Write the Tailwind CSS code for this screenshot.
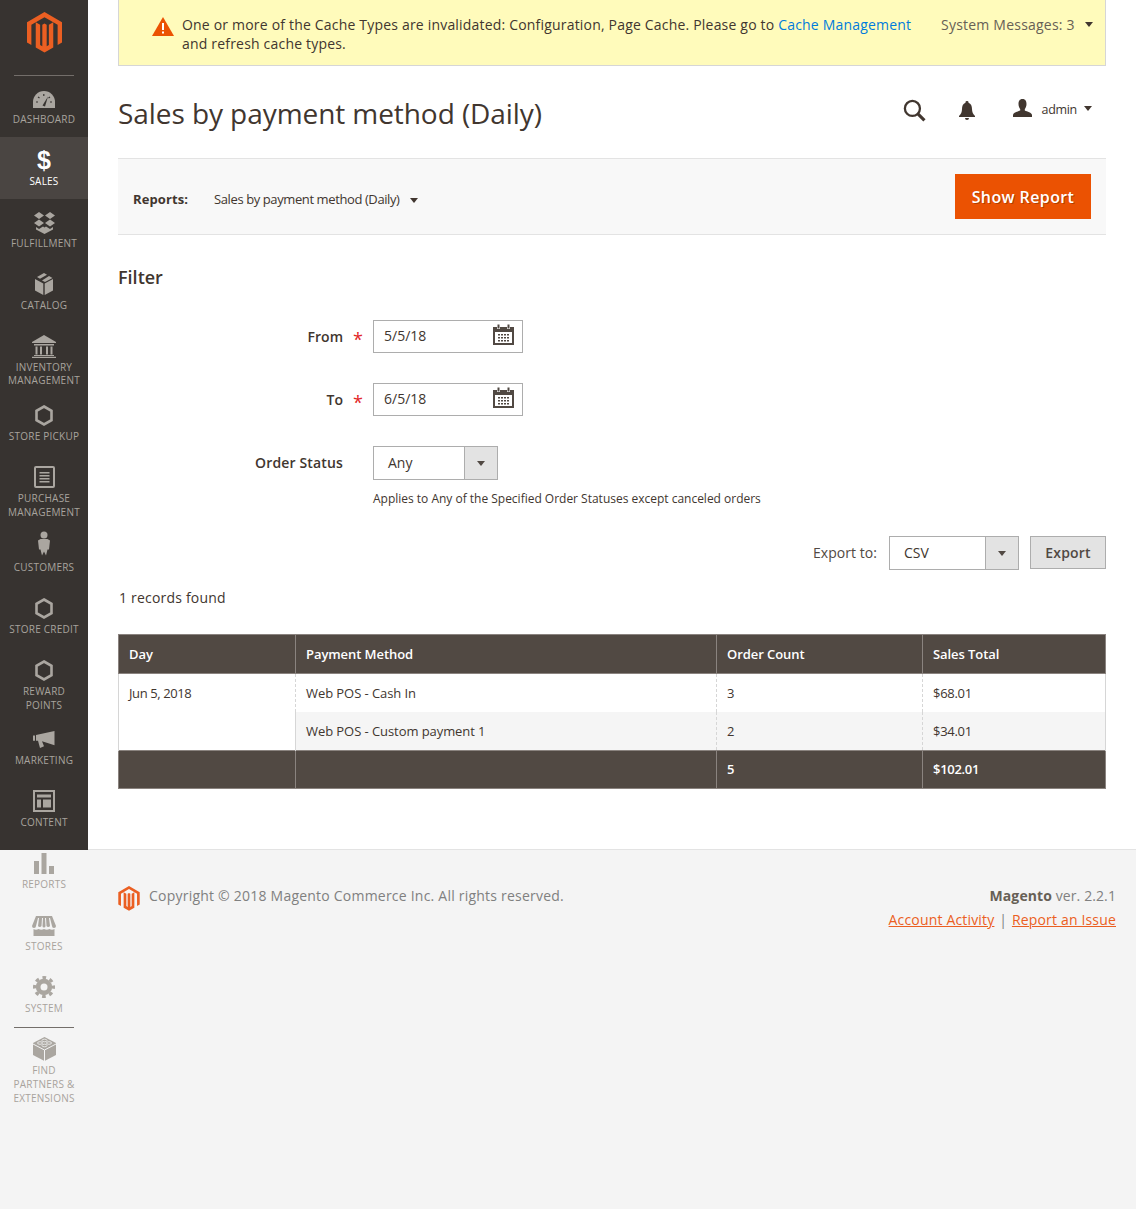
<!DOCTYPE html>
<html><head><meta charset="utf-8"><script src="https://cdn.jsdelivr.net/npm/@tailwindcss/browser@4"></script></head>
<body class="bg-white">
<div class="relative w-[1136px] h-[1209px] overflow-hidden font-['Open_Sans',sans-serif] text-[14px] text-[#41362f]">

<!-- main -->
<main class="h-[849px] pl-[118px] pr-[30px]">
  <div class="h-[66px] bg-[#fffbbb] border border-t-0 border-[#d6d6d6] flex">
    <svg class="ml-[33px] mt-[17px] w-[22px] h-[19px] shrink-0" viewBox="0 0 22 19"><path d="M11 0 L22 19 H0Z" fill="#eb5202"/><rect x="10" y="6" width="2" height="7" fill="#fff"/><rect x="10" y="14.5" width="2" height="2" fill="#fff"/></svg>
    <p class="ml-[8px] mt-[15px] w-[745px] leading-[19px] tracking-[0.19px] text-[#41362f]">One or more of the Cache Types are invalidated: Configuration, Page Cache. Please go to <span class="text-[#007bdb]">Cache Management</span> and refresh cache types.</p>
    <div class="ml-[14px] mt-[15px] flex h-[19px] items-center text-[#676056]"><span class="tracking-[0.22px]">System Messages: 3</span><span class="ml-[10px] w-0 h-0 border-x-[4.5px] border-x-transparent border-t-[5px] border-t-[#41362f]"></span></div>
  </div>

  <header class="h-[92px] flex relative">
    <h1 class="mt-[28px] text-[28px] leading-[38px] font-normal tracking-[-0.07px] text-[#41362f]">Sales by payment method (Daily)</h1>
    <div class="ml-auto flex items-start pt-[33px]">
      <svg class="w-[23px] h-[23px]" viewBox="0 0 22 22" fill="none" stroke="#41362f"><circle cx="9" cy="9" r="7.2" stroke-width="2.2"/><path d="M14 14 L20.5 20.5" stroke-width="3"/></svg>
      <svg class="ml-[33px] mt-[2px] w-[16px] h-[19px]" viewBox="0 0 16 19" fill="#41362f"><path d="M8 0 a1.5 1.5 0 0 1 1.5 1.7 C12 2.5 13 5 13 8 C13 11 14 13 16 15 V16 H0 V15 C2 13 3 11 3 8 C3 5 4 2.5 6.5 1.7 A1.5 1.5 0 0 1 8 0Z"/><path d="M6 17 h4 a2 2 0 0 1-4 0Z"/></svg>
      <svg class="ml-[38px] w-[19px] h-[18px]" viewBox="0 0 19 18" fill="#41362f"><path d="M9.5 0 C12.5 0 13.5 2.3 13.5 5 C13.5 7.5 12.5 9 11.8 10 V11.5 C14 12.5 19 13.5 19 16 V18 H0 V16 C0 13.5 5 12.5 7.2 11.5 V10 C6.5 9 5.5 7.5 5.5 5 C5.5 2.3 6.5 0 9.5 0Z"/></svg>
      <span class="ml-[10px] text-[12.5px] tracking-[-0.3px] leading-[22px] text-[#41362f]">admin</span>
      <span class="ml-[7px] mt-[7px] w-0 h-0 border-x-[4px] border-x-transparent border-t-[5px] border-t-[#41362f]"></span>
      <span class="w-[14px]"></span>
    </div>
  </header>

  <section class="h-[77px] bg-[#f8f8f8] border-y border-[#e3e3e3] flex items-center pl-[15px] pr-[15px]">
    <span class="mt-[7px] text-[13px] font-bold tracking-[0.1px]">Reports:</span>
    <span class="ml-[26px] mt-[7px] text-[13px] tracking-[-0.4px] text-[#41362f]">Sales by payment method (Daily)</span>
    <span class="ml-[10px] mt-[7px] w-0 h-0 border-x-[4px] border-x-transparent border-t-[5px] border-t-[#41362f]"></span>
    <button class="ml-auto w-[136px] h-[45px] bg-[#eb5202] text-white text-[16px] font-semibold tracking-[0.4px] [text-shadow:1px_1px_0_rgba(0,0,0,0.25)]">Show Report</button>
  </section>

  <h2 class="mt-[30px] text-[18px] leading-[25px] font-semibold text-[#41362f]">Filter</h2>

  <div class="mt-[30px] flex h-[33px]">
    <label class="w-[225px] text-right font-semibold leading-[34px]">From</label>
    <span class="w-[30px] pl-[10px] text-[#e22626] text-[18px] leading-[39px]">*</span>
    <div class="w-[150px] h-[33px] bg-white border border-[#adadad] flex items-center pl-[10px] pr-[8px] pb-[2px] text-[#41362f]">5/5/18
      <svg class="ml-auto mb-[2px] w-[21px] h-[21px]" viewBox="0 0 21 21"><path d="M0 3 H4 V5 H7 V3 H14 V5 H17 V3 H21 V21 H0Z M2 8 V19 H19 V8Z" fill="#514943" fill-rule="evenodd"/><rect x="4.5" y="0.5" width="2" height="4" fill="#514943"/><rect x="14.5" y="0.5" width="2" height="4" fill="#514943"/><path d="M5 10h2v1.500h-2z M8 10h2v1.500h-2z M11 10h2v1.500h-2z M14 10h2v1.500h-2z M5 13h2v1.500h-2z M8 13h2v1.500h-2z M11 13h2v1.500h-2z M14 13h2v1.500h-2z M5 16h2v1.500h-2z M8 16h2v1.500h-2z M11 16h2v1.500h-2z M14 16h2v1.500h-2z" fill="#514943"/></svg>
    </div>
  </div>
  <div class="mt-[30px] flex h-[33px]">
    <label class="w-[225px] text-right font-semibold leading-[34px]">To</label>
    <span class="w-[30px] pl-[10px] text-[#e22626] text-[18px] leading-[39px]">*</span>
    <div class="w-[150px] h-[33px] bg-white border border-[#adadad] flex items-center pl-[10px] pr-[8px] pb-[2px] text-[#41362f]">6/5/18
      <svg class="ml-auto mb-[2px] w-[21px] h-[21px]" viewBox="0 0 21 21"><path d="M0 3 H4 V5 H7 V3 H14 V5 H17 V3 H21 V21 H0Z M2 8 V19 H19 V8Z" fill="#514943" fill-rule="evenodd"/><rect x="4.5" y="0.5" width="2" height="4" fill="#514943"/><rect x="14.5" y="0.5" width="2" height="4" fill="#514943"/><path d="M5 10h2v1.500h-2z M8 10h2v1.500h-2z M11 10h2v1.500h-2z M14 10h2v1.500h-2z M5 13h2v1.500h-2z M8 13h2v1.500h-2z M11 13h2v1.500h-2z M14 13h2v1.500h-2z M5 16h2v1.500h-2z M8 16h2v1.500h-2z M11 16h2v1.500h-2z M14 16h2v1.500h-2z" fill="#514943"/></svg>
    </div>
  </div>
  <div class="mt-[30px] flex h-[34px]">
    <label class="w-[225px] text-right font-semibold leading-[34px] tracking-[0.15px]">Order Status</label>
    <span class="w-[30px]"></span>
    <div class="w-[125px] h-[34px] bg-white border border-[#adadad] flex items-center pl-[14px]"><span class="-mt-[2px]">Any</span>
      <span class="ml-auto w-[33px] h-full bg-[#e3e3e3] border-l border-[#adadad] flex items-center justify-center"><span class="w-0 h-0 border-x-[4px] border-x-transparent border-t-[5px] border-t-[#514943]"></span></span>
    </div>
  </div>
  <p class="ml-[255px] mt-[10px] text-[12px] leading-[18px] tracking-[-0.01px] text-[#41362f]">Applies to Any of the Specified Order Statuses except canceled orders</p>

  <div class="mt-[28px] flex items-start justify-end h-[34px]">
    <span class="leading-[34px] text-[#514943] tracking-[0.05px]">Export to:</span>
    <div class="ml-[12px] w-[130px] h-[34px] bg-white border border-[#adadad] flex items-center pl-[14px]"><span class="-mt-[2px]">CSV</span>
      <span class="ml-auto w-[33px] h-full bg-[#e3e3e3] border-l border-[#adadad] flex items-center justify-center"><span class="w-0 h-0 border-x-[4px] border-x-transparent border-t-[5px] border-t-[#514943]"></span></span>
    </div>
    <button class="ml-[11px] w-[76px] h-[33px] bg-[#e3e3e3] border border-[#adadad] font-semibold tracking-[0.2px] text-[#514943]">Export</button>
  </div>

  <p class="mt-[18px] ml-[1px] leading-[20px] tracking-[0.2px] text-[#41362f]">1 records found</p>

  <table class="mt-[26px] w-[987px] table-fixed border-collapse text-[13px] tracking-[-0.07px]">
    <colgroup><col class="w-[177px]"><col class="w-[421px]"><col class="w-[206px]"><col class="w-[183px]"></colgroup>
    <thead>
      <tr class="h-[39px] bg-[#514943] text-white">
        <th class="border border-[#8a837f] px-[10px] pt-[1px] text-left font-semibold">Day</th>
        <th class="border border-[#8a837f] px-[10px] pt-[1px] text-left font-semibold">Payment Method</th>
        <th class="border border-[#8a837f] px-[10px] pt-[1px] text-left font-semibold">Order Count</th>
        <th class="border border-[#8a837f] px-[10px] pt-[1px] text-left font-semibold">Sales Total</th>
      </tr>
    </thead>
    <tbody>
      <tr class="h-[38px]">
        <td rowspan="2" class="align-top pt-[10px] px-[10px] border-l border-[#d6d6d6] bg-white tracking-[-0.4px]">Jun 5, 2018</td>
        <td class="px-[10px] pt-[2px] border-l border-dashed border-[#d6d6d6]">Web POS - Cash In</td>
        <td class="px-[10px] pt-[2px] border-l border-dashed border-[#d6d6d6]">3</td>
        <td class="px-[10px] pt-[2px] border-x border-dashed [border-right-style:solid] border-[#d6d6d6] tracking-[-0.3px]">$68.01</td>
      </tr>
      <tr class="h-[39px] bg-[#f5f5f5]">
        <td class="px-[10px] pt-[1px] border-l border-[#d6d6d6]">Web POS - Custom payment 1</td>
        <td class="px-[10px] pt-[1px] border-l border-dashed border-[#d6d6d6]">2</td>
        <td class="px-[10px] pt-[1px] border-x border-dashed [border-right-style:solid] border-[#d6d6d6] tracking-[-0.3px]">$34.01</td>
      </tr>
    </tbody>
    <tfoot>
      <tr class="h-[38px] bg-[#514943] text-white font-semibold">
        <td class="border border-[#8a837f] px-[10px]"></td>
        <td class="border border-[#8a837f] px-[10px]"></td>
        <td class="border border-[#8a837f] px-[10px]">5</td>
        <td class="border border-[#8a837f] px-[10px] tracking-[-0.3px]">$102.01</td>
      </tr>
    </tfoot>
  </table>
</main>

<!-- footer -->
<footer class="h-[360px] bg-[#f4f4f4] border-t border-[#e3e3e3] pl-[118px] pr-[20px] pt-[36px] flex items-start">
  <svg class="w-[22px] h-[25px] shrink-0" viewBox="0 0 36 42"><path d="M18 0 L36 10.400 V31.200 L31.500 33.800 V13 L18 5.200 L4.500 13 V33.800 L0 31.200 V10.400Z M9 10.400 L13.500 13 V33.800 L15.750 35.100 V13 L18 11.700 L20.250 13 V35.100 L22.500 33.800 V13 L27 10.400 V36.400 L18 41.600 L9 36.400Z" fill="#eb5f22"/></svg>
  <p class="ml-[9px] leading-[20px] tracking-[0.22px] text-[#808080]">Copyright © 2018 Magento Commerce Inc. All rights reserved.</p>
  <div class="ml-auto text-right leading-[24px] text-[#808080] tracking-[0.1px] -mt-[2px]">
    <p><b class="font-bold text-[#676056]">Magento</b> ver. 2.2.1</p>
    <p class="tracking-[0.17px]"><a class="text-[#eb5f22] underline">Account Activity</a> <span class="mx-[1px]">|</span> <a class="text-[#eb5f22] underline">Report an Issue</a></p>
  </div>
</footer>

<!-- sidebar (overlays the footer) -->
<div class="absolute left-0 top-0 w-[88px] h-[850px] bg-[#373330]"></div>
<nav class="absolute left-0 top-0 w-[88px] text-[10px] leading-[14px] tracking-[0.22px] text-center text-[#a8a39d] flex flex-col">
  <div class="h-[76px] flex flex-col items-center relative">
    <svg class="mt-[12px] w-[35px] h-[41px]" viewBox="0 0 36 42"><path d="M18 0 L36 10.400 V31.200 L31.500 33.800 V13 L18 5.200 L4.500 13 V33.800 L0 31.200 V10.400Z M9 10.400 L13.500 13 V33.800 L15.750 35.100 V13 L18 11.700 L20.250 13 V35.100 L22.500 33.800 V13 L27 10.400 V36.400 L18 41.600 L9 36.400Z" fill="#eb5f22"/></svg>
    <span class="absolute left-[14px] bottom-0 w-[60px] h-px bg-[#736e6a]"></span>
  </div>
  <div class="h-[61px] flex flex-col items-center">
    <div class="h-[36px] flex items-center justify-center pt-[11px]"><svg class="w-[22px] h-[17px]" viewBox="0 0 22 17"><path d="M0 17 V11 A11 11 0 0 1 22 11 V17Z" fill="#aaa6a0"/><path d="M9.500 14.500 L15 5.500 L12 15.500Z" fill="#373330"/><path d="M3 11h2M5 6l1.500 1M10.800 3v2M17 6l-1.500 1M19 11h-2" stroke="#373330" stroke-width="1.200"/></svg></div>
    <span>DASHBOARD</span>
  </div>
  <div class="h-[62px] bg-[#4a4542] text-white flex flex-col items-center">
    <div class="h-[37px] flex items-center justify-center font-['Liberation_Sans',sans-serif] font-bold text-[25px] leading-none pt-[9px]">$</div>
    <span>SALES</span>
  </div>
  <div class="h-[62px] flex flex-col items-center">
    <div class="h-[37px] flex items-center justify-center pt-[9px]"><svg class="w-[23px] h-[23px]" viewBox="0 0 23 23" fill="#aaa6a0"><path d="M6 1 L11 4.500 L6 8 L1 4.500Z M17 1 L22 4.500 L17 8 L12 4.500Z M6 8.500 L11 12 L6 15.500 L1 12Z M17 8.500 L22 12 L17 15.500 L12 12Z"/><path d="M3 16 L6 18 L10 15.500 L11.500 16.500 L13 15.500 L17 18 L20 16 V18.500 L11.500 23 L3 18.500Z"/></svg></div>
    <span>FULFILLMENT</span>
  </div>
  <div class="h-[62px] flex flex-col items-center">
    <div class="h-[37px] flex items-center justify-center pt-[9px]"><svg class="w-[20px] h-[22px]" viewBox="0 0 20 22" fill="#aaa6a0"><path d="M10 0 L13 1.700 L6 5.700 L3 4Z M15 3 L18.500 5 L11 9 L8 7.500Z M1 6 L9.300 10.500 V22 L1 17.500Z M19 6 V17.500 L10.700 22 V10.500Z"/></svg></div>
    <span>CATALOG</span>
  </div>
  <div class="h-[69px] flex flex-col items-center leading-[13px]">
    <div class="h-[37px] flex items-center justify-center pt-[9px]"><svg class="w-[24px] h-[23px]" viewBox="0 0 24 23" fill="#aaa6a0"><path d="M12 0 L24 7 V8 H0 V7Z"/><path d="M2 9h20v1.500H2z M3.500 11.500h2v8h-2z M8 11.500h2v8H8z M14 11.500h2v8h-2z M18.500 11.500h2v8h-2z M2 20h20v1H2z M0 21.800h24V23H0z"/></svg></div>
    <span class="mt-[1px]">INVENTORY<br>MANAGEMENT</span>
  </div>
  <div class="h-[62px] flex flex-col items-center">
    <div class="h-[27px] pt-[10px] flex items-center justify-center box-content"><svg class="w-[18px] h-[21px]" viewBox="0 0 18 21" fill="none" stroke="#aaa6a0" stroke-width="2.600"><path d="M9 1.500 L16.500 5.800 V15.200 L9 19.500 L1.500 15.200 V5.800Z"/></svg></div>
    <span>STORE PICKUP</span>
  </div>
  <div class="h-[69px] flex flex-col items-center">
    <div class="h-[37px] flex items-center justify-center pt-[9px]"><svg class="w-[21px] h-[22px]" viewBox="0 0 21 22"><rect x="1" y="1" width="19" height="20" rx="1" fill="none" stroke="#aaa6a0" stroke-width="2"/><path d="M5.500 6h10v1.500h-10z M5.500 9h10v1.500h-10z M5.500 12h10v1.500h-10z M5.500 15h10v1.500h-10z" fill="#aaa6a0"/></svg></div>
    <span>PURCHASE<br>MANAGEMENT</span>
  </div>
  <div class="h-[62px] flex flex-col items-center">
    <div class="h-[37px] -mt-[7px] flex items-center justify-center pt-[9px] box-content"><svg class="w-[12px] h-[25px]" viewBox="0 0 12 24" fill="#aaa6a0"><circle cx="6" cy="3.500" r="3.500"/><path d="M2.500 7.500 H9.500 L12 9 L11 18 H9.500 L8 24 L6 20 L4 24 L2.500 18 H1 L0 9Z"/></svg></div>
    <span class="-mt-[2px]">CUSTOMERS</span>
  </div>
  <div class="h-[62px] flex flex-col items-center">
    <div class="h-[37px] flex items-center justify-center pt-[9px]"><svg class="w-[18px] h-[21px]" viewBox="0 0 18 21" fill="none" stroke="#aaa6a0" stroke-width="2.600"><path d="M9 1.500 L16.500 5.800 V15.200 L9 19.500 L1.500 15.200 V5.800Z"/></svg></div>
    <span>STORE CREDIT</span>
  </div>
  <div class="h-[69px] flex flex-col items-center">
    <div class="h-[37px] flex items-center justify-center pt-[9px]"><svg class="w-[18px] h-[21px]" viewBox="0 0 18 21" fill="none" stroke="#aaa6a0" stroke-width="2.600"><path d="M9 1.500 L16.500 5.800 V15.200 L9 19.500 L1.500 15.200 V5.800Z"/></svg></div>
    <span>REWARD<br>POINTS</span>
  </div>
  <div class="h-[62px] flex flex-col items-center">
    <div class="h-[27px] pt-[10px] flex items-center justify-center box-content"><svg class="w-[22px] h-[17px]" viewBox="0 0 22 19" fill="#aaa6a0" preserveAspectRatio="none"><path d="M0 5 H2 V11 H0Z M3 4.500 L21.500 0 V16 L9 11.500 L11 17 L7 19 L5 11 H3Z"/></svg></div>
    <span>MARKETING</span>
  </div>
  <div class="h-[62px] flex flex-col items-center">
    <div class="h-[37px] flex items-center justify-center pt-[9px]"><svg class="w-[22px] h-[22px]" viewBox="0 0 22 22"><rect x="1" y="1" width="20" height="20" fill="none" stroke="#aaa6a0" stroke-width="2"/><path d="M4 4.500h14v3H4z M4 9.500h4v8H4z M10 9.500h8v8h-8z" fill="#aaa6a0"/></svg></div>
    <span>CONTENT</span>
  </div>
  <div class="h-[62px] flex flex-col items-center">
    <div class="h-[37px] flex items-center justify-center pt-[9px]"><svg class="w-[20px] h-[21px]" viewBox="0 0 20 21" fill="#aaa6a0"><path d="M0 8h5v13H0z M7.500 0h5v21h-5z M15 13h5v8h-5z"/></svg></div>
    <span>REPORTS</span>
  </div>
  <div class="h-[62px] flex flex-col items-center">
    <div class="h-[37px] flex items-center justify-center pt-[11px]"><svg class="w-[24px] h-[20px]" viewBox="0 0 24 20" fill="#aaa6a0"><path d="M4 0 H20 L24 10 A2 2 0 0 1 20 10 L18 2 H17 L18 10 A2 2 0 0 1 14.500 10 L14 2 H13 L13.500 10 A1.500 1.500 0 0 1 10.500 10 L11 2 H10 L9.500 10 A2 2 0 0 1 6 10 L7 2 H6 L4 10 A2 2 0 0 1 0 10Z"/><path d="M1.500 13 C3 14 5 14 6.500 13 C8.500 14 10 14 12 13 C14 14 15.500 14 17.500 13 C19 14 21 14 22.500 13 V20 H1.500Z"/></svg></div>
    <span>STORES</span>
  </div>
  <div class="h-[62px] flex flex-col items-center relative">
    <div class="h-[37px] flex items-center justify-center pt-[9px]"><svg class="w-[22px] h-[22px]" viewBox="0 0 22 22"><circle cx="11" cy="11" r="9.500" fill="none" stroke="#aaa6a0" stroke-width="3" stroke-dasharray="3.7 3.76" stroke-dashoffset="1.85"/><circle cx="11" cy="11" r="8.200" fill="#aaa6a0"/><circle cx="11" cy="11" r="3.500" fill="#f4f4f4"/></svg></div>
    <span>SYSTEM</span>
    <span class="absolute left-[14px] bottom-[-2px] w-[60px] h-px bg-[#736e6a]"></span>
  </div>
  <div class="flex flex-col items-center">
    <div class="h-[37px] flex items-center justify-center pt-[9px]"><svg class="w-[23px] h-[24px]" viewBox="0 0 23 24" fill="#aaa6a0"><path d="M11.500 0 L23 6 V18 L11.500 24 L0 18 V6Z"/><path d="M0 7 L11.500 13 L23 7 M11.500 13 V24" fill="none" stroke="#f4f4f4"/><ellipse cx="7" cy="6" rx="2.500" ry="1.300" fill="none" stroke="#f4f4f4" stroke-width=".8"/><ellipse cx="16" cy="6" rx="2.500" ry="1.300" fill="none" stroke="#f4f4f4" stroke-width=".8"/><ellipse cx="11.500" cy="3.500" rx="2.500" ry="1.300" fill="none" stroke="#f4f4f4" stroke-width=".8"/><ellipse cx="11.500" cy="8.500" rx="2.500" ry="1.300" fill="none" stroke="#f4f4f4" stroke-width=".8"/></svg></div>
    <span>FIND<br>PARTNERS &amp;<br>EXTENSIONS</span>
  </div>
</nav>
</div>
</body></html>
